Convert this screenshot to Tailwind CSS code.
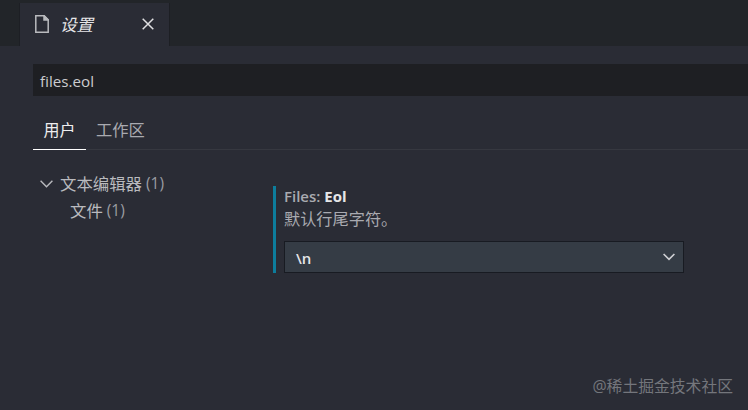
<!DOCTYPE html>
<html lang="zh-CN">
<head>
    <meta charset="UTF-8">
    <meta name="viewport" content="width=device-width, initial-scale=1.0">
    <title>设置</title>
    <script src="https://cdn.jsdelivr.net/npm/@tailwindcss/browser@4"></script>
</head>
<body class="relative flex flex-col h-screen overflow-hidden bg-[#2a2c35] text-[#b9babe] text-base leading-6 font-['Open_Sans','Noto_Sans_CJK_SC',sans-serif]">
    <!-- Tabs -->
    <div class="flex h-[46px] bg-[#222529] shrink-0">
        <div class="ml-[19px] mt-[3px] w-[151px] flex items-center pl-[15px] pr-[15px] pb-[1px] bg-[#2a2c35] border-l border-r border-[#1d1f24]">
            <svg class="w-[14px] h-[18px] shrink-0" viewBox="0 0 14 18" fill="none" stroke="#b9babe" stroke-width="1.5">
                <path d="M.8.8h8.4l4 4v12.4H.8z"/>
                <path d="M9 .8v4.2h4.2z" fill="#b9babe"/>
            </svg>
            <span class="ml-[11px] pt-[2px] text-[16.5px] italic text-[#e6e6e8]">设置</span>
            <svg class="ml-auto w-3 h-3" viewBox="0 0 12 12" fill="none" stroke="#e0e0e2" stroke-width="1.5">
                <path d="M.7.7l10.6 10.6M11.3.7L.7 11.3"/>
            </svg>
        </div>
    </div>

    <div class="pl-[33px]">
        <!-- Search -->
        <div class="mt-[18px] h-8 flex items-center pl-[7px] pt-[2px] bg-[#1e1f23] text-[#cccccf]">
            <span class="text-[15.2px]">files.eol</span>
        </div>

        <!-- Scope -->
        <div class="mt-[21px] h-[33px] flex border-b border-[#363840]">
            <div class="w-[53px] h-[33px] pt-[1px] text-center text-[#eeeeef] border-b border-white">用户</div>
            <div class="pl-[10px] pt-[1px] text-[16.3px] text-[#a9aab0]">工作区</div>
        </div>

        <div class="flex">
            <!-- Tree -->
            <div class="w-[240px] pt-[20px] leading-[27px]">
                <div class="flex items-center">
                    <svg class="ml-[7px] mr-[7px] w-[13px] h-2" viewBox="0 0 13 8" fill="none" stroke="#b9babe" stroke-width="1.4">
                        <path d="M.6.8l5.9 6 5.9-6"/>
                    </svg>
                    <span class="text-[16.4px]">文本编辑器</span>
                    <span class="ml-1 text-[15.5px] text-[#9b9ca2]">(1)</span>
                </div>
                <div class="flex items-center pl-[37px]">
                    <span class="text-[16.4px]">文件</span>
                    <span class="ml-1 text-[15.5px] text-[#9b9ca2]">(1)</span>
                </div>
            </div>

            <!-- Setting -->
            <div class="mt-[36px] w-[411px] h-[87px] pl-2 border-l-[3px] border-[#0d7d9c]">
                <div class="h-[20px] leading-[20px] text-[15px] font-semibold text-[#a9aab0]">Files: <span class="font-bold text-[#e6e6e8]">Eol</span></div>
                <div class="h-[35px] leading-[26px] text-[16.2px] text-[#a9aab0]">默认行尾字符。</div>
                <div class="h-8 flex items-center justify-between pl-[11px] pr-2 bg-[#353c45] border border-[#181b22]">
                    <span class="pt-[2px] text-[15px] font-semibold text-[#e6e6e8]">\n</span>
                    <svg class="w-3 h-2" viewBox="0 0 12 8" fill="none" stroke="#cfd0d4" stroke-width="1.6">
                        <path d="M.6 1l5.4 5.4L11.4 1"/>
                    </svg>
                </div>
            </div>
        </div>
    </div>

    <div class="absolute right-[15px] top-[374px] text-[15.8px] text-[#74767c]">@稀土掘金技术社区</div>
</body>
</html>
